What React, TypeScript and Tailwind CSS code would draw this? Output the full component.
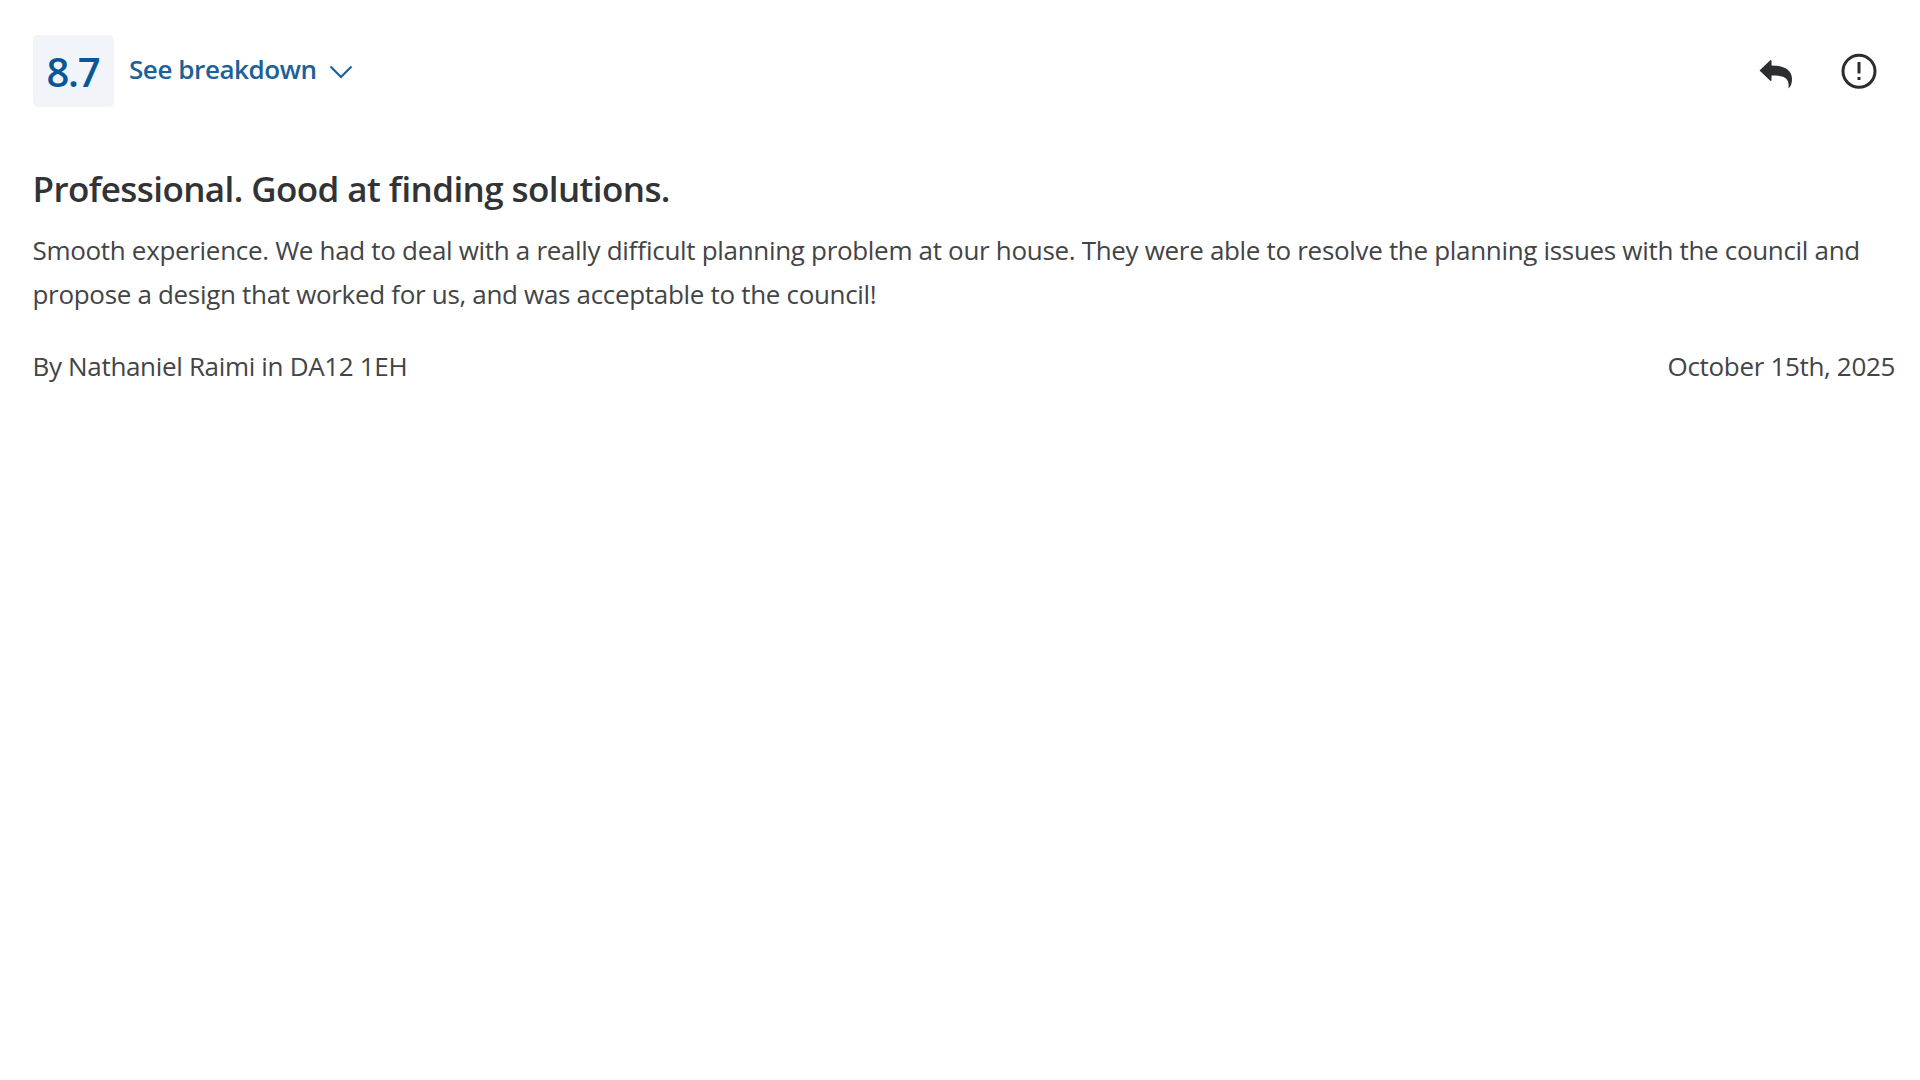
const review = {
  score: '8.7',
  title: 'Professional. Good at finding solutions.',
  lines: [
    'Smooth experience. We had to deal with a really difficult planning problem at our house. They were able to resolve the planning issues with the council and',
    'propose a design that worked for us, and was acceptable to the council!',
  ],
  author: 'By Nathaniel Raimi in DA12 1EH',
  date: 'October 15th, 2025',
};

const ReviewCard = () => {
  return (
    <article className="pl-[32.5px] pr-[25px] pt-[35px]">
      {/* Score and actions */}
      <div className="flex items-center h-[72px]">
        <div className="flex items-center justify-center w-[81px] h-[72px] pt-px rounded-[5px] bg-[#f1f5fa] text-[40px] font-semibold tracking-[-1.2px] text-[#08579a]">
          {review.score}
        </div>
        <button className="flex items-center ml-[15.5px] text-[26px] leading-[36px] font-semibold tracking-[-0.42px] text-[#1b6199]">
          <span className="whitespace-nowrap -mt-[4px]">See breakdown</span>
          <svg className="ml-3 mt-px w-6 h-[14px]" viewBox="0 0 24 14" fill="none" stroke="currentColor" strokeWidth="2.2">
            <path d="M1.5 1.5 L12 12 L22.5 1.5" />
          </svg>
        </button>
        <div className="flex items-center ml-auto mr-[18px] gap-[48px] text-[#2c2d2f]">
          <button aria-label="Reply" className="mt-[5px]">
            <svg className="w-[34px] h-[32px]" viewBox="0 0 34 32" fill="currentColor">
              <path d="M0.5 12.5 L11.5 2 L12.5 2.5 V7.5 C24 7.5 33 11 33 21 C33 25 32 28.5 29.5 30.5 C30.5 21 27 17.5 12.5 17.5 V22.5 L11.5 23 Z" />
            </svg>
          </button>
          <button aria-label="Report">
            <svg className="w-9 h-9" viewBox="0 0 36 36" fill="none" stroke="currentColor">
              <circle cx="18" cy="18.3" r="16" strokeWidth="3" />
              <path d="M18 9 V20.5" strokeWidth="3" />
              <path d="M18 24 V27" strokeWidth="3" />
            </svg>
          </button>
        </div>
      </div>

      {/* Review text */}
      <h3 className="mt-[58px] text-[35px] leading-[48px] font-semibold tracking-[-0.59px] [font-feature-settings:'liga'] text-[#323335] whitespace-nowrap">{review.title}</h3>
      <div className="mt-4 text-[26px] leading-[43.5px] tracking-[-0.317px] [font-feature-settings:'liga'] text-[#434446]">
        {review.lines.map((line) => (
          <p key={line} className="whitespace-nowrap">
            <span>{line}</span>
          </p>
        ))}
      </div>

      {/* Author and date */}
      <div className="flex items-center justify-between mt-[29px] text-[26px] leading-[43.5px] tracking-[-0.33px] text-[#434446]">
        <span>{review.author}</span>
        <span>{review.date}</span>
      </div>
    </article>
  );
};

const App = () => (
  <main className="min-h-screen overflow-hidden bg-white font-['Open_Sans',sans-serif]">
    <ReviewCard />
  </main>
);

export default App;
